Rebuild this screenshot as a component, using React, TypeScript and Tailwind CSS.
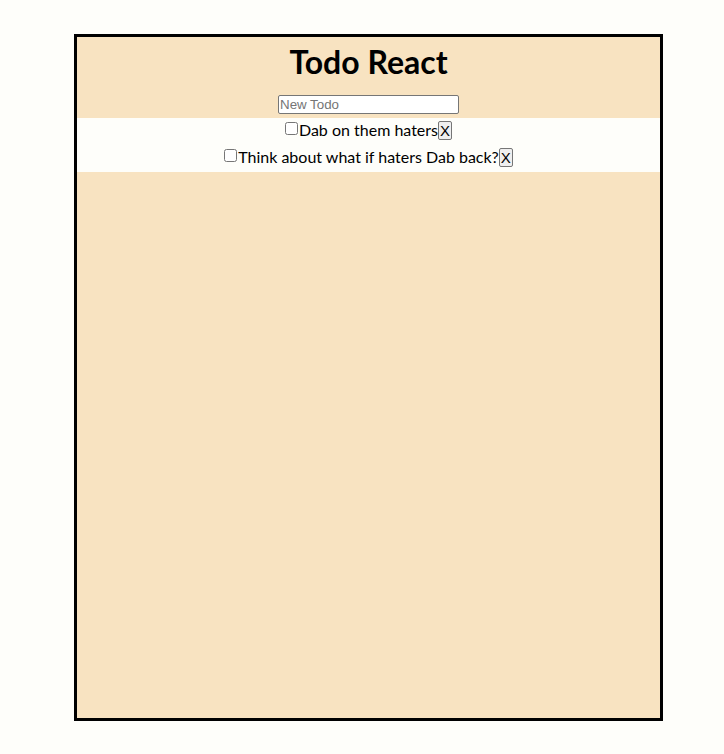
import { useState } from 'react';

type Todo = { id: number; text: string; done: boolean };

export default function App() {
  const [todos, setTodos] = useState<Todo[]>([
    { id: 1, text: 'Dab on them haters', done: false },
    { id: 2, text: 'Think about what if haters Dab back?', done: false },
  ]);
  const [draft, setDraft] = useState('');

  const addTodo = (e: React.FormEvent) => {
    e.preventDefault();
    if (!draft.trim()) return;
    setTodos([...todos, { id: Date.now(), text: draft, done: false }]);
    setDraft('');
  };

  return (
    <div className="min-h-[754px] bg-[#fefefa] pt-[34px] pl-[74px]" style={{ fontFamily: 'Lato, sans-serif' }}>
      <div className="w-[589px] h-[687px] border-[3px] border-black bg-[#f8e3c1] flex flex-col">
        <h1 className="text-[32px] font-bold text-center leading-[38px] pt-[6px] text-black">Todo React</h1>
        <form onSubmit={addTodo} className="flex justify-center pt-[14px] pb-[4px]">
          <input
            value={draft}
            onChange={(e) => setDraft(e.target.value)}
            placeholder="New Todo"
            className="w-[181px] h-[19px] border border-[#767676] rounded-[2px] bg-white px-[1px] text-[13.33px] placeholder:text-[#757575]"
            style={{ fontFamily: '"Liberation Sans", Arial, sans-serif' }}
          />
        </form>
        <ul className="bg-[#fefefa]">
          {todos.map((todo) => (
            <li key={todo.id} className="h-[27px] pb-[4px] flex items-center justify-center text-[16px] text-black">
              <input
                type="checkbox"
                checked={todo.done}
                onChange={() => setTodos(todos.map((t) => (t.id === todo.id ? { ...t, done: !t.done } : t)))}
                className="w-[13px] h-[13px] mr-[1px] mb-[2px]"
              />
              <span>{todo.text}</span>
              <button
                onClick={() => setTodos(todos.filter((t) => t.id !== todo.id))}
                className="h-[19px] px-[1px] border border-[#767676] rounded-[2px] bg-[#efefef] text-[15px] leading-[17px] mt-[2px]"
                style={{ fontFamily: '"Liberation Sans", Arial, sans-serif' }}
              >
                X
              </button>
            </li>
          ))}
        </ul>
      </div>
    </div>
  );
}
